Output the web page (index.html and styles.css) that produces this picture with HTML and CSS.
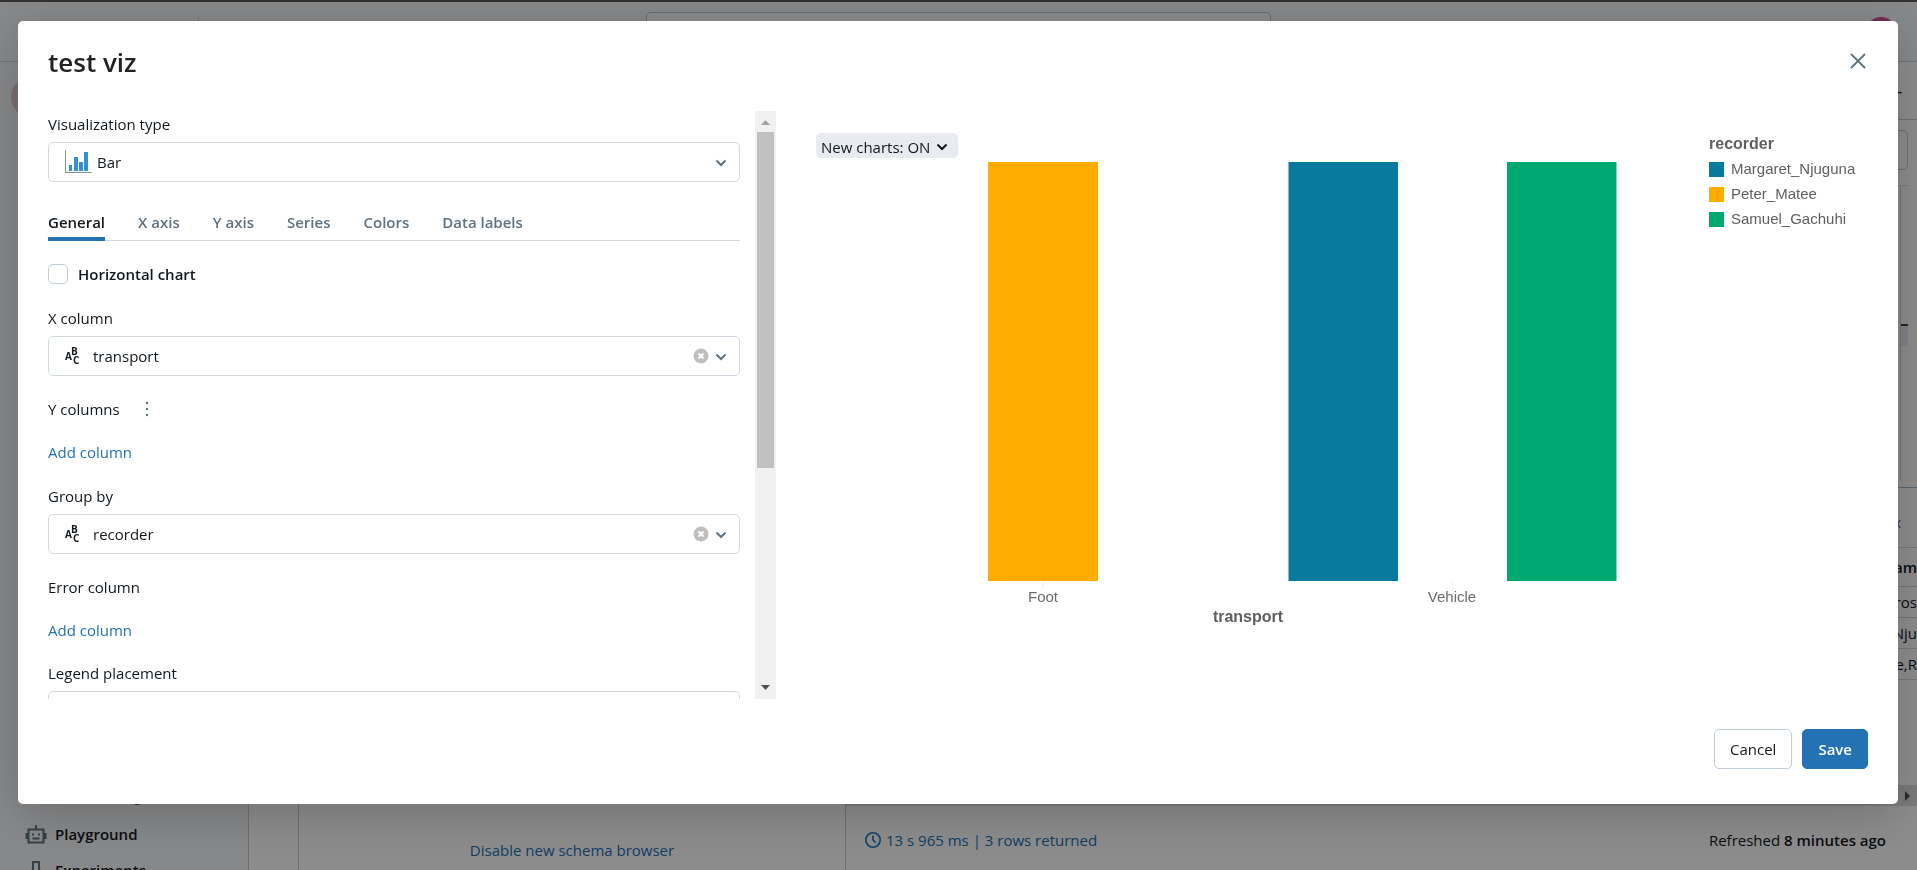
FILE: index.html
```html
<!DOCTYPE html>
<html lang="en">
<head>
<meta charset="utf-8">
<title>test viz</title>
<link rel="stylesheet" href="styles.css">
</head>
<body>
<div class="app">
  <header class="topnav">
    <span class="nav-divider"></span>
    <input class="nav-search" type="search" aria-label="Search">
    <span class="avatar"></span>
  </header>
  <div class="workspace">
    <nav class="sidebar">
      <span class="new-button"></span>
      <div class="nav-list">
        <span class="nav-heading">Machine Learning</span>
        <a class="nav-item" href="#">
          <svg class="nav-icon" width="22" height="22" viewBox="0 0 22 22" fill="none" stroke="currentColor" stroke-width="2"><path d="M3.500 6.500h15v13h-15zM11 2v4M1.500 10v6M20.500 10v6M7.500 15.500h7"/><path d="M7 11.500h2M13 11.500h2"/></svg>
          Playground</a>
        <a class="nav-item" href="#">
          <svg class="nav-icon" width="22" height="22" viewBox="0 0 22 22" fill="none" stroke="currentColor" stroke-width="2"><path d="M7 3h8M8 3v7L4 20h14L14 10V3"/></svg>
          Experiments</a>
      </div>
    </nav>
    <aside class="schema"><a class="schema-link" href="#">Disable new schema browser</a></aside>
    <main class="editor">
      <div class="query-head"><span class="query-mark">-</span></div>
      <div class="query-bar"><div class="query-box"></div></div>
      <div class="code"><div class="code-text"></div><div class="code-ruler"></div></div>
      <div class="result-tabs">x</div>
      <table class="results">
        <thead><tr><th>team</th></tr></thead>
        <tbody><tr><td>Gros</td></tr><tr><td>Nju</td></tr><tr><td>Matee,R</td></tr></tbody>
      </table>
      <div class="hscroll"><div class="hscroll-thumb"></div><svg width="8" height="10" viewBox="0 0 8 10"><path d="M1 0l5 5-5 5z" fill="#505050"/></svg></div>
      <footer class="status">
        <span class="status-left"><svg width="18" height="18" viewBox="0 0 18 18" fill="none" stroke="currentColor" stroke-width="1.600"><circle cx="9" cy="9" r="7.200"/><path d="M9 4.500V9l2.500 2.500"/></svg>13 s 965 ms | 3 rows returned</span>
        <span>Refreshed <b>8 minutes ago</b></span>
      </footer>
    </main>
  </div>
</div>

<div class="overlay">
  <section class="modal" role="dialog" aria-labelledby="dialog-title">
    <header class="modal-head">
      <h1 class="modal-title" id="dialog-title">test viz</h1>
      <button class="close" type="button" aria-label="Close"><svg width="20" height="20" viewBox="0 0 20 20" fill="none" stroke="currentColor" stroke-width="1.800" stroke-linecap="round"><path d="M3.500 3.500l13 13M16.500 3.500l-13 13"/></svg></button>
    </header>
    <div class="modal-body">
      <div class="panel">
        <form class="options">
          <div class="field">
            <label class="label" for="viz">Visualization type</label>
            <div class="pick">
              <svg class="pick-icon" width="27" height="24" viewBox="0 0 27 24"><path d="M.5 0v22.500H27" fill="none" stroke="#8496a3"/><path d="M4 15h3v6H4zM9 7h4v14H9zM14 12h4v9h-4zM19 2h4v19h-4z" fill="#338fd6"/></svg>
              <select class="select select-viz" id="viz"><option>Bar</option></select>
              <svg class="chev" width="12" height="8" viewBox="0 0 12 8"><path d="M1.500 1.500L6 6l4.500-4.500"/></svg>
            </div>
          </div>
          <div class="tabs" role="tablist">
            <button class="tab tab-active" type="button" role="tab">General</button>
            <button class="tab" type="button" role="tab">X axis</button>
            <button class="tab" type="button" role="tab">Y axis</button>
            <button class="tab" type="button" role="tab">Series</button>
            <button class="tab" type="button" role="tab">Colors</button>
            <button class="tab" type="button" role="tab">Data labels</button>
          </div>
          <label class="check"><input class="box" type="checkbox">Horizontal chart</label>
          <div class="field field-axis">
            <label class="label" for="xcol">X column</label>
            <div class="pick">
              <svg class="pick-icon abc" width="20" height="24" viewBox="0 0 20 24"><text x="0" y="16">A</text><text x="6" y="11">B</text><text x="8" y="20">C</text></svg>
              <select class="select" id="xcol"><option>transport</option></select>
              <button class="clear" type="button" aria-label="Clear X column"><svg width="16" height="16" viewBox="0 0 16 16"><circle cx="8" cy="8" r="7.500" fill="#bfbfbf"/><path d="M5.500 5.500l5 5M10.500 5.500l-5 5" stroke="#fff" stroke-width="1.800"/></svg></button>
              <svg class="chev" width="12" height="8" viewBox="0 0 12 8"><path d="M1.500 1.500L6 6l4.500-4.500"/></svg>
            </div>
          </div>
          <div class="field field-add">
            <div class="label-row"><span class="label">Y columns</span>
              <button class="more" type="button" aria-label="Y columns menu"><svg width="4" height="18" viewBox="0 0 4 18" fill="#5f7281"><circle cx="2" cy="3" r="1.200"/><circle cx="2" cy="9" r="1.200"/><circle cx="2" cy="15" r="1.200"/></svg></button></div>
            <button class="add" type="button">Add column</button>
          </div>
          <div class="field field-axis">
            <label class="label" for="group">Group by</label>
            <div class="pick">
              <svg class="pick-icon abc" width="20" height="24" viewBox="0 0 20 24"><text x="0" y="16">A</text><text x="6" y="11">B</text><text x="8" y="20">C</text></svg>
              <select class="select" id="group"><option>recorder</option></select>
              <button class="clear" type="button" aria-label="Clear group by"><svg width="16" height="16" viewBox="0 0 16 16"><circle cx="8" cy="8" r="7.500" fill="#bfbfbf"/><path d="M5.500 5.500l5 5M10.500 5.500l-5 5" stroke="#fff" stroke-width="1.800"/></svg></button>
              <svg class="chev" width="12" height="8" viewBox="0 0 12 8"><path d="M1.500 1.500L6 6l4.500-4.500"/></svg>
            </div>
          </div>
          <div class="field field-add">
            <span class="label">Error column</span>
            <button class="add" type="button">Add column</button>
          </div>
          <div class="field">
            <label class="label" for="legend">Legend placement</label>
            <div class="pick"><select class="select" id="legend"><option></option></select></div>
          </div>
        </form>
        <div class="scrollbar">
          <svg class="arrow" width="9" height="5" viewBox="0 0 9 5"><path d="M0 5L4.500 0 9 5z" fill="#a3a3a3"/></svg>
          <div class="thumb"></div>
          <svg class="arrow" width="9" height="5" viewBox="0 0 9 5"><path d="M0 0h9L4.500 5z" fill="#505050"/></svg>
        </div>
      </div>
      <div class="chart">
        <div class="chart-main">
          <button class="toggle" type="button">New charts: ON<svg width="12" height="8" viewBox="0 0 12 8" fill="none" stroke="#11171c" stroke-width="2"><path d="M1.500 1.500L6 6l4.500-4.500"/></svg></button>
          <svg class="plot" viewBox="0 0 893 470" role="img" aria-label="Bar chart of transport by recorder">
            <rect x="172" y="0" width="110" height="419" fill="#ffab00"/>
            <rect x="472.500" y="0" width="109.500" height="419" fill="#077a9d"/>
            <rect x="691" y="0" width="109.500" height="419" fill="#00a972"/>
            <path d="M227 420v6M636.500 420v6" stroke="#eee"/>
            <text x="227" y="440">Foot</text>
            <text x="636" y="440">Vehicle</text>
            <text class="axis-title" x="432" y="460">transport</text>
          </svg>
        </div>
        <div class="legend">
          <strong class="legend-title">recorder</strong>
          <span class="key"><i class="swatch blue"></i>Margaret_Njuguna</span>
          <span class="key"><i class="swatch amber"></i>Peter_Matee</span>
          <span class="key"><i class="swatch green"></i>Samuel_Gachuhi</span>
        </div>
      </div>
    </div>
    <footer class="modal-foot">
      <button class="btn" type="button">Cancel</button>
      <button class="btn btn-primary" type="button">Save</button>
    </footer>
  </section>
</div>
</body>
</html>
```
FILE: styles.css
```css
* { box-sizing: border-box; }
body {
  margin: 0;
  overflow: hidden;
  background: #fff;
  color: #11171c;
  font: 15px/20px "Open Sans", "Noto Sans", sans-serif;
}
button, select, input { font: inherit; color: inherit; }
button { border: 0; padding: 0; background: none; cursor: pointer; }
a { color: inherit; text-decoration: none; }
svg { display: block; flex: none; }

/* Application behind the dialog */
.app { display: flex; flex-direction: column; height: 100vh; border-top: 2px solid #5c5c5c; }
.topnav {
  display: flex;
  flex: none;
  height: 60px;
  padding: 10px 21px 0 198px;
  background: #f6f7f9;
  border-bottom: 1px solid #cdd3da;
}
.nav-divider { width: 1px; height: 30px; margin-top: 5px; background: #cdd3da; }
.nav-search { width: 625px; height: 40px; margin-left: 447px; background: #fff; border: 1px solid #b8c2cc; border-radius: 5px; }
.avatar { width: 30px; height: 30px; margin: 5px 0 0 auto; border-radius: 50%; background: #c6529f; }
.workspace { display: flex; flex: 1; min-height: 0; }
.sidebar {
  display: flex;
  flex-direction: column;
  justify-content: space-between;
  flex: none;
  width: 249px;
  padding: 15px 11px 0;
  background: #f6f7f9;
  border-right: 1px solid #c3ccd5;
}
.new-button { width: 200px; height: 40px; border-radius: 20px; background: #e0c8cb; }
.nav-list { display: flex; flex-direction: column; height: 90px; padding-left: 14px; }
.nav-heading { flex: none; height: 36px; padding-top: 6px; color: #5f7281; font-size: 14px; }
.nav-item { display: flex; flex: none; align-items: center; gap: 8px; height: 36px; font-weight: 600; }
.nav-icon { color: #5f7281; }
.schema {
  display: flex;
  align-items: flex-end;
  justify-content: center;
  flex: none;
  width: 547px;
  margin-left: 49px;
  padding-bottom: 10px;
  border-left: 1px solid #c3c9d8;
}
.schema-link, .status-left { color: #2272b4; }
.editor { display: flex; flex-direction: column; flex: 1; border-left: 1px solid #c3c9d8; }
.query-head { height: 58px; padding: 18px 15px; text-align: right; border-bottom: 1px solid #c3ccd5; }
.query-mark { font-weight: 600; }
.query-bar { height: 65px; padding: 10px 9px 0 20px; }
.query-box { height: 40px; border: 1px solid #c3c9d8; border-radius: 5px; }
.code { display: flex; height: 296px; margin: 0 9px 6px 20px; border-top: 1px solid #d9dde3; }
.code-text { flex: 1; border-right: 1px solid #c9ced6; }
.code-ruler { width: 7px; height: 160px; background: linear-gradient(#fff 138px, #444 138px, #444 140px, #e8ecf6 140px); }
.result-tabs { height: 61px; padding: 24px 16px 0; text-align: right; color: #5f7281; border-top: 1px solid #a5b8c8; border-bottom: 1px solid #d1d9e1; }
.results { width: 100%; border-collapse: collapse; text-align: right; }
.results th, .results td { height: 31px; padding: 0; border-bottom: 1px solid #d1d9e1; }
.results th { height: 38px; font-weight: 600; }
.hscroll { display: flex; align-items: center; justify-content: space-between; height: 21px; margin-top: auto; padding: 0 5px 0 22px; background: #ddd; }
.hscroll-thumb { width: 220px; height: 17px; background: #aaa; }
.status { display: flex; align-items: center; justify-content: space-between; height: 64px; padding: 4px 31px 0 18px; }
.status-left { display: flex; align-items: center; gap: 4px; }
.status b { font-weight: 600; }

/* Dialog */
.overlay { position: fixed; inset: 0; padding: 21px 19px 0 18px; background: rgba(0, 0, 0, .45); }
.modal { padding: 0 30px 35px; background: #fff; border-radius: 5px; box-shadow: 0 10px 50px rgba(0, 0, 0, .2); }
.modal-head { display: flex; align-items: flex-start; justify-content: space-between; height: 90px; padding-top: 25px; }
.modal-title { margin: 0; font-size: 26px; line-height: 32px; font-weight: 600; color: #222; }
.close { padding: 5px 0; color: #5f7281; }
.modal-body { display: grid; grid-template-columns: 40% 60%; height: calc(100vh - 282px); }
.panel { display: flex; gap: 15px; min-height: 0; overflow: hidden; }
.options { display: flex; flex-direction: column; flex: 1; gap: 23px; min-width: 0; padding-top: 3px; }
.field { display: flex; flex-direction: column; flex: none; gap: 8px; }
.field-axis { margin-top: 1px; }
.field-add { gap: 23px; align-items: flex-start; }
.label-row { display: flex; align-items: center; gap: 25px; }
.more { height: 20px; }
.add { color: #2272b4; }
.pick { position: relative; }
.select {
  display: block;
  width: 100%;
  height: 40px;
  padding: 0 60px 0 44px;
  appearance: none;
  background: #fff;
  border: 1px solid #d1d9e1;
  border-radius: 5px;
}
.select-viz { padding-left: 48px; }
.pick-icon { position: absolute; left: 17px; top: 8px; }
.abc { font: bold 10px "Open Sans", sans-serif; fill: #11171c; }
.clear { position: absolute; right: 31px; top: 12px; }
.chev { position: absolute; right: 13px; top: 17px; fill: none; stroke: #5f7281; stroke-width: 2; }
.tabs { display: flex; gap: 33px; flex: none; margin-top: 7px; border-bottom: 1px solid #d1d9e1; }
.tab { height: 29px; padding-bottom: 11px; margin-bottom: -1px; font-weight: 600; color: #5f7281; }
.tab-active { color: #11171c; border-bottom: 4px solid #2272b4; padding-bottom: 7px; }
.check { display: flex; align-items: center; gap: 10px; flex: none; height: 20px; font-weight: 600; }
.box { width: 20px; height: 20px; margin: 0; appearance: none; background: #fff; border: 1px solid #c0cdd8; border-radius: 5px; }
.scrollbar { display: flex; flex-direction: column; align-items: center; width: 21px; padding: 9px 0; background: #f1f1f1; }
.thumb { width: 17px; height: 336px; margin: 7px 0 auto; background: #c1c1c1; }

.chart { display: flex; justify-content: space-between; padding: 22px 0 0 40px; color: #5f5f5f; font: 15px/20px "Liberation Sans", Arial, sans-serif; }
.chart-main { display: flex; flex-direction: column; align-items: flex-start; gap: 4px; flex: 1; min-width: 0; }
.toggle { display: flex; align-items: center; gap: 6px; height: 25px; padding: 2px 10px 0 5px; background: #e8ecf0; border-radius: 5px; font: 15px/20px "Open Sans", "Noto Sans", sans-serif; color: #11171c; }
.plot { width: 100%; fill: #6b6b6b; text-anchor: middle; }
.axis-title { font-size: 16px; font-weight: bold; fill: #5f5f5f; }
.legend { display: flex; flex-direction: column; gap: 5px; width: 159px; padding-top: 1px; }
.legend-title { font-size: 16px; }
.key { display: flex; align-items: center; gap: 7px; white-space: nowrap; }
.swatch { width: 15px; height: 15px; }
.blue { background: #077a9d; }
.amber { background: #ffab00; }
.green { background: #00a972; }

.modal-foot { display: flex; justify-content: flex-end; gap: 10px; padding-top: 30px; }
.btn { height: 40px; padding: 0 15px; background: #fff; border: 1px solid #c0cdd8; border-radius: 5px; }
.btn-primary { background: #2272b4; border-color: #2272b4; color: #fff; font-weight: 600; }
```
